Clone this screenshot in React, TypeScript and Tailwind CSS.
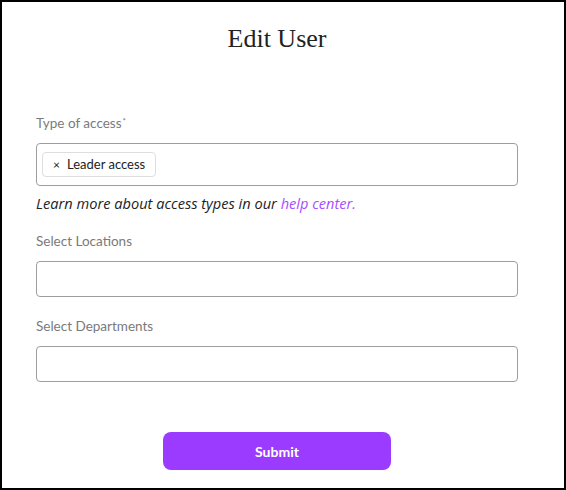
import type { ReactNode } from 'react'

const sans = "font-['Lato','Open_Sans',sans-serif]"

function Field({ label, required, children }: { label: string; required?: boolean; children: ReactNode }) {
  return (
    <div className="flex flex-col">
      <label className="h-5 text-[13.5px] leading-5 text-[#7a7a7a] mb-[10px]">
        {label}
        {required && <span className="relative -top-[4px] text-[8px] leading-none ml-[1px]">*</span>}
      </label>
      {children}
    </div>
  )
}

export default function App() {
  return (
    <div className={`w-[566px] h-[490px] border-2 border-black bg-white ${sans}`}>
      <div className="pl-[34px] pr-[46px] pt-[21px] flex flex-col">
        <h1 className="text-center text-[26px] leading-8 text-[#222] font-['Liberation_Serif',serif]">
          Edit User
        </h1>

        {/* Type of access */}
        <div className="mt-[58px]">
          <Field label="Type of access" required>
            <div className="h-[43px] rounded-[4px] border border-[#9e9e9e] px-[5px] flex items-center">
              <span className="h-[25px] flex items-center gap-[7px] pl-[10px] pr-[10px] rounded-[4px] border border-[#dedede] text-[13px] text-[#222]">
                <span className="text-[12px] leading-none">×</span>
                Leader access
              </span>
            </div>
          </Field>
          <p className="mt-[7px] text-[14.6px] leading-5 italic text-[#222] font-['Open_Sans',sans-serif]">
            Learn more about access types in our{' '}
            <a href="#" className="text-[#a64dff]">help center.</a>
          </p>
        </div>

        {/* Locations */}
        <div className="mt-[18px]">
          <Field label="Select Locations">
            <div className="h-[36px] rounded-[4px] border border-[#9e9e9e]" />
          </Field>
        </div>

        {/* Departments */}
        <div className="mt-[19px]">
          <Field label="Select Departments">
            <div className="h-[36px] rounded-[4px] border border-[#9e9e9e]" />
          </Field>
        </div>

        <div className="mt-[50px] flex justify-center">
          <button className="w-[228px] h-[38px] rounded-[8px] bg-[#9b3bff] text-white text-[14px] font-bold">
            Submit
          </button>
        </div>
      </div>
    </div>
  )
}
